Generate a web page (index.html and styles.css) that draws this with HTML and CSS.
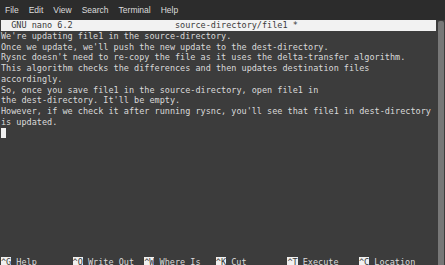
FILE: index.html
```html
<!DOCTYPE html>
<html lang="en">
<head>
    <meta charset="UTF-8">
    <meta name="viewport" content="width=device-width, initial-scale=1.0">
    <title>nano - source-directory/file1</title>
    <link rel="stylesheet" href="styles.css">
</head>
<body>
    <!-- Terminal window menu -->
    <div class="menubar">
        <span>File</span>
        <span>Edit</span>
        <span>View</span>
        <span>Search</span>
        <span>Terminal</span>
        <span>Help</span>
    </div>

    <div class="terminal">
        <div class="screen">
            <div class="titlebar">  GNU nano 6.2                    source-directory/file1 *</div>
            <div class="line">We're updating file1 in the source-directory.</div>
            <div class="line">Once we update, we'll push the new update to the dest-directory.</div>
            <div class="line">Rysnc doesn't need to re-copy the file as it uses the delta-transfer algorithm.</div>
            <div class="line">This algorithm checks the differences and then updates destination files</div>
            <div class="line">accordingly.</div>
            <div class="line">So, once you save file1 in the source-directory, open file1 in</div>
            <div class="line">the dest-directory. It'll be empty.</div>
            <div class="line">However, if we check it after running rysnc, you'll see that file1 in dest-directory</div>
            <div class="line">is updated.</div>
            <div class="line"><span class="cursor"> </span></div>

            <!-- Shortcut help line -->
            <div class="shortcuts">
                <div class="shortcut"><span class="key">^G</span> Help</div>
                <div class="shortcut"><span class="key">^O</span> Write Out</div>
                <div class="shortcut"><span class="key">^W</span> Where Is</div>
                <div class="shortcut"><span class="key">^K</span> Cut</div>
                <div class="shortcut"><span class="key">^T</span> Execute</div>
                <div class="shortcut"><span class="key">^C</span> Location</div>
            </div>
        </div>
        <div class="scrollbar">
            <div class="thumb"></div>
        </div>
    </div>
</body>
</html>
```

FILE: styles.css
```css
/* Dark terminal window running nano */
html, body {
    margin: 0;
    height: 100%;
    overflow: hidden;
}

body {
    background-color: #3c3c3c;
    display: flex;
    flex-direction: column;
}

.menubar {
    height: 20px;
    background-color: #2c2c2c;  /* Darker strip for the menu */
    color: #dcdcdc;
    font-family: "Liberation Sans", Arial, sans-serif;
    font-size: 8.5px;
    display: flex;
    align-items: center;
    gap: 10px;
    padding-left: 5px;
    flex-shrink: 0;
}

.terminal {
    flex: 1;
    display: flex;
    min-height: 0;
}

.screen {
    width: 436px;
    height: 247.25px;
    padding-left: 1px;
    display: flex;
    flex-direction: column;
    font-family: "DejaVu Sans Mono", monospace;
    font-size: 8.5px;
    line-height: 10.75px;
    color: #dadada;
    white-space: pre;
}

.titlebar {
    background-color: #f2f2f2;
    color: #3a3a3a;
    width: 435px;
}

.cursor {
    background-color: #f0f0f0;
}

.shortcuts {
    margin-top: auto;
    display: flex;
}

/* Each shortcut takes 14 columns */
.shortcut {
    width: 71.6px;
}

.key {
    background-color: #f0f0f0;
    color: #3a3a3a;
}

.scrollbar {
    width: 8px;
    padding: 1px 1px 0 1px;
    box-sizing: border-box;
}

.thumb {
    height: 100%;
    background-color: #777777;
    border-radius: 2px 2px 0 0;
}
```
